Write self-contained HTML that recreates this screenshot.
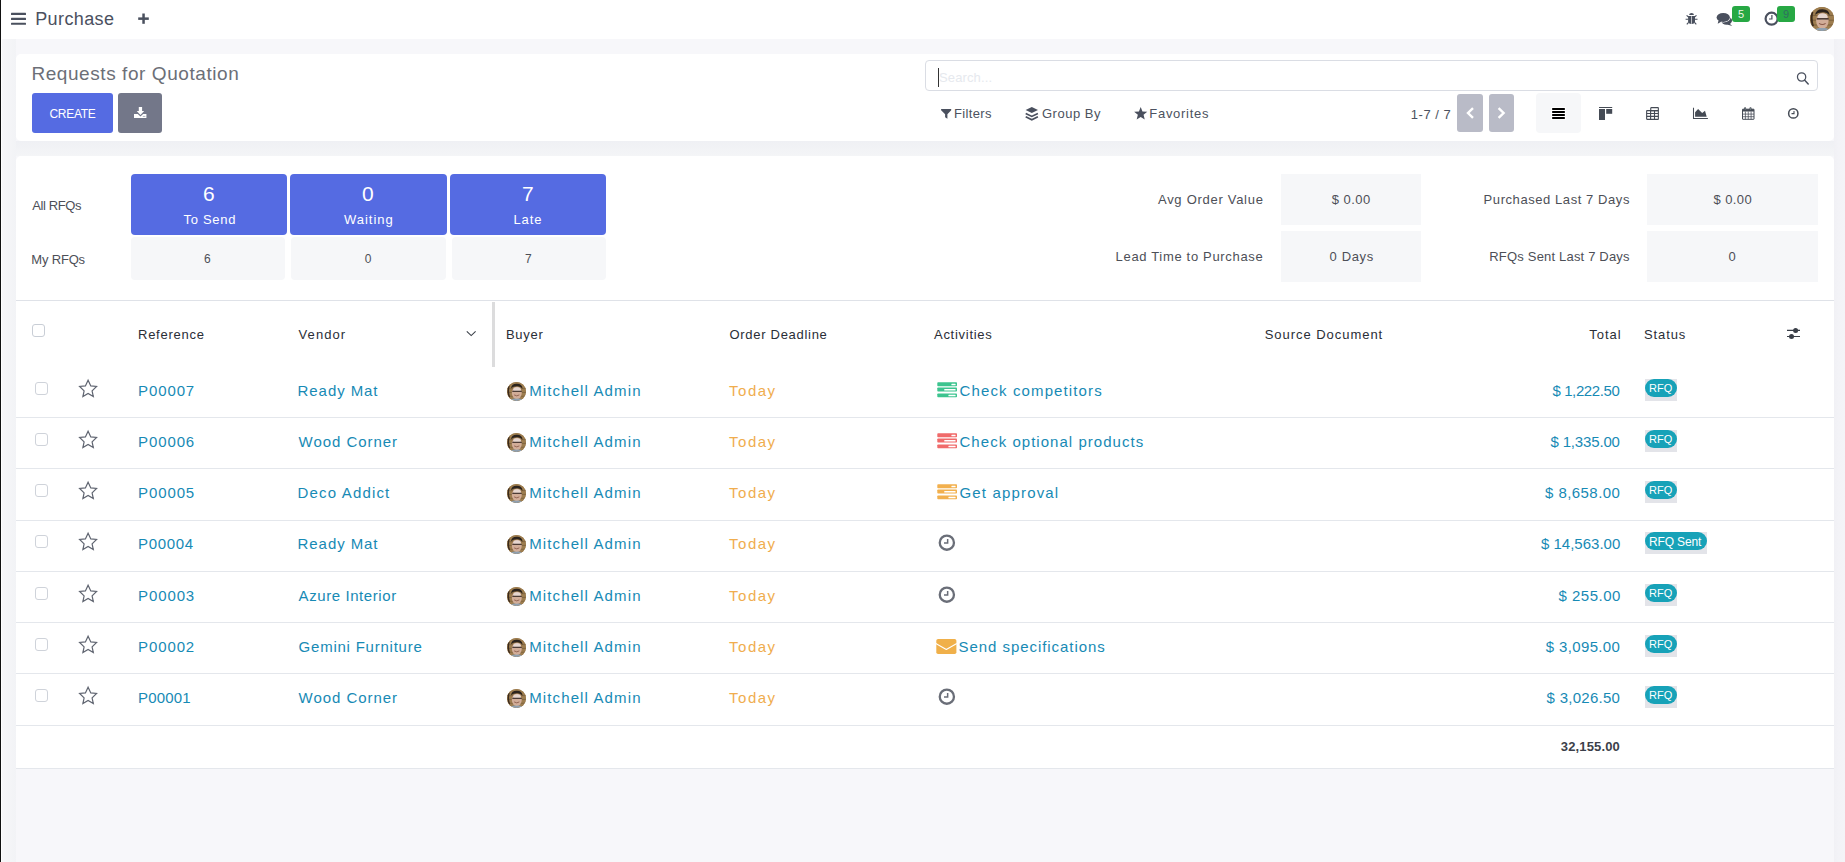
<!DOCTYPE html>
<html><head><meta charset="utf-8"><title>Requests for Quotation</title>
<style>
html,body{margin:0;padding:0;}
body{width:1845px;height:862px;position:relative;overflow:hidden;background:#f7f7fa;font-family:"Liberation Sans",sans-serif;}
.a{position:absolute;}
.i{position:absolute;overflow:visible;}
.t{position:absolute;white-space:pre;line-height:1;font-family:"Liberation Sans",sans-serif;}
</style></head><body>
<div class="a" style="left:0;top:0;width:1px;height:862px;background:#111"></div>
<div class="a" style="left:1px;top:0;width:1844px;height:39px;background:#fff"></div>
<div class="a" style="left:1px;top:0;width:1px;height:862px;background:#fff"></div>
<div class="a" style="left:2px;top:39px;width:14px;height:823px;background:linear-gradient(90deg,#f7f7f9,#f2f3f6)"></div>
<div class="a" style="left:1834px;top:39px;width:11px;height:823px;background:linear-gradient(90deg,#f1f1f5,#f3f3f7 40%,#f4f4f7)"></div>
<div class="a" style="left:16px;top:141px;width:1818px;height:15px;background:linear-gradient(180deg,#eff0f4,#f4f5f7)"></div>
<svg class="i" style="left:11px;top:12px;width:15px;height:13px;" viewBox="0 0 15 13"><rect x="0" y="0.85" width="15" height="2.2" rx="0.5" fill="#4a505e"/><rect x="0" y="5.75" width="15" height="2.2" rx="0.5" fill="#4a505e"/><rect x="0" y="10.65" width="15" height="2.2" rx="0.5" fill="#4a505e"/></svg>
<svg class="i" style="left:138px;top:13px;width:11px;height:11px;" viewBox="0 0 11 11"><rect x="4.3" y="0.5" width="2.5" height="10.3" fill="#4a505e"/><rect x="0.2" y="4.4" width="10.6" height="2.5" fill="#4a505e"/></svg>
<svg class="i" style="left:1685px;top:12px;width:13px;height:14px;" viewBox="0 0 13 14"><g fill="#4a505e"><path d="M4.1 3.1 Q4.3 0.9 6.55 0.9 Q8.8 0.9 9 3.1 Z"/><path d="M3.1 4 H10 V9.5 Q10 11.9 6.55 11.9 Q3.1 11.9 3.1 9.5 Z"/></g><g stroke="#4a505e" stroke-width="1.1" fill="none"><path d="M3.6 5 L1.6 3.3 M9.5 5 L11.5 3.3 M3.1 7.3 L0.6 7.3 M10 7.3 L12.5 7.3 M3.6 10.3 L1.8 12.4 M9.5 10.3 L11.3 12.4"/></g><rect x="6.25" y="4.2" width="0.65" height="7.6" fill="#fff"/></svg>
<svg class="i" style="left:1716px;top:12px;width:18px;height:15px;" viewBox="0 0 18 15"><ellipse cx="10.6" cy="8.6" rx="5.5" ry="4.1" fill="#4a505e"/><path d="M13.2 11.2 L16.2 13.9 L11.2 12.4 Z" fill="#4a505e"/><ellipse cx="7.25" cy="5.45" rx="7.3" ry="5.1" fill="#fff"/><ellipse cx="7.25" cy="5.45" rx="6.65" ry="4.45" fill="#4a505e"/><path d="M2.6 8.2 L1.7 11.8 L5.6 9.6 Z" fill="#4a505e"/></svg>
<div class="a" style="left:1732px;top:6px;width:18px;height:16px;background:#27a844;border-radius:3px"></div>
<div class="t" style="left:1738px;top:9px;font-size:11px;color:#f4f6e8">5</div>
<svg class="i" style="left:1764px;top:11px;width:15px;height:15px;" viewBox="0 0 15 15"><circle cx="7.6" cy="7.7" r="6" stroke="#4a505e" stroke-width="2.2" fill="#fff"/><path d="M7.9 4 V8 H5" stroke="#4a505e" stroke-width="1.2" fill="none"/></svg>
<div class="a" style="left:1777px;top:6px;width:18px;height:16px;background:#27a844;border-radius:3px"></div>
<div class="t" style="left:1783px;top:9px;font-size:11px;color:#2f6e60">9</div>
<div class="a" style="left:1810px;top:7px;width:24px;height:24px;border-radius:50%;overflow:hidden;background:#9a7a4e"><svg style="display:block;width:24px;height:24px" viewBox="0 0 20 20"><rect x="0" y="0" width="20" height="20" fill="#9d7d4f"/><path d="M0 7 H20 M0 11 H20 M0 15 H20" stroke="#7a5f3c" stroke-width="0.8"/><ellipse cx="10.3" cy="11.5" rx="5.2" ry="6.6" fill="#d2ad98"/><ellipse cx="10.6" cy="8" rx="4" ry="2.6" fill="#e6d6cf"/><path d="M4.2 6.5 Q5 1.6 10.5 1.8 Q16 1.8 16.4 7 Q14 4 10.5 4.4 Q6.5 4.4 4.2 6.5Z" fill="#2b231d"/><rect x="5.6" y="9.2" width="10" height="1.3" fill="#4a3a32"/><path d="M7.5 13.6 Q10.3 15.6 13 13.6" stroke="#8a5a4a" stroke-width="0.9" fill="none"/><path d="M3 20 Q5 16.8 10 17.6 Q15 16.8 17.5 20 Z" fill="#8fa0b0"/><path d="M2 4 Q0.5 10 2.5 16" stroke="#3a2a1c" stroke-width="1.6" fill="none"/></svg></div>
<div class="a" style="left:16px;top:54px;width:1818px;height:87px;background:#fff;border-radius:5px"></div>
<div class="a" style="left:32px;top:93px;width:81px;height:40px;background:#556be2;border-radius:3px"></div>
<div class="a" style="left:118px;top:93px;width:44px;height:40px;background:#737789;border-radius:3px"></div>
<svg class="i" style="left:134px;top:107px;width:13px;height:12px;" viewBox="0 0 13 12"><path d="M4.8 0 H8.1 V4 H10.2 L6.45 8 L2.7 4 H4.8 Z" fill="#fff"/><path d="M0 7 H3.8 L6.45 9.6 L9.1 7 H12.4 V11 H0 Z" fill="#fff"/><rect x="8.8" y="8.9" width="2.6" height="0.9" fill="#a9abb8"/></svg>
<div class="a" style="left:925px;top:60px;width:891px;height:29px;border:1px solid #dadde4;border-radius:4px;background:#fff"></div>
<div class="a" style="left:938px;top:68px;width:1px;height:19px;background:#333"></div>
<svg class="i" style="left:1797px;top:72px;width:13px;height:13px;" viewBox="0 0 13 13"><circle cx="4.6" cy="5" r="4.15" stroke="#4a505e" stroke-width="1.25" fill="none"/><path d="M7.5 8.1 L11.2 12" stroke="#4a505e" stroke-width="1.5" stroke-linecap="round"/></svg>
<svg class="i" style="left:941px;top:109px;width:11px;height:11px;" viewBox="0 0 11 11"><path d="M0.1 0 H10.2 V1.2 L6.4 5.2 V9.8 L4.1 8.2 V5.2 L0.1 1.2 Z" fill="#4a505e"/></svg>
<svg class="i" style="left:1025px;top:107px;width:14px;height:14px;" viewBox="0 0 14 14"><path d="M6.8 0 L13 3 L6.8 6 L0.6 3 Z" fill="#4a505e"/><path d="M0.7 6.4 L6.8 9.4 L12.9 6.4" stroke="#4a505e" stroke-width="1.7" fill="none"/><path d="M0.7 9.7 L6.8 12.7 L12.9 9.7" stroke="#4a505e" stroke-width="1.7" fill="none"/></svg>
<svg class="i" style="left:1134px;top:107px;width:14px;height:13px;" viewBox="0 0 14 13"><path d="M6.70 0.00 L8.46 4.47 L13.26 4.77 L9.55 7.83 L10.76 12.48 L6.70 9.90 L2.64 12.48 L3.85 7.83 L0.14 4.77 L4.94 4.47 Z" fill="#4a505e"/></svg>
<div class="a" style="left:1457px;top:94px;width:26px;height:38px;background:#b9bbc7;border-radius:3px"></div>
<div class="a" style="left:1489px;top:94px;width:25px;height:38px;background:#b9bbc7;border-radius:3px"></div>
<svg class="i" style="left:1466px;top:107px;width:9px;height:12px;" viewBox="0 0 9 12"><path d="M7 1.2 L2 6 L7 10.8" stroke="#fff" stroke-width="2.4" fill="none"/></svg>
<svg class="i" style="left:1497px;top:107px;width:9px;height:12px;" viewBox="0 0 9 12"><path d="M1.6 1.2 L6.6 6 L1.6 10.8" stroke="#fff" stroke-width="2.4" fill="none"/></svg>
<div class="a" style="left:1536px;top:93px;width:45px;height:40px;background:#f6f7f9;border-radius:4px"></div>
<svg class="i" style="left:1551px;top:107px;width:15px;height:13px;" viewBox="0 0 15 13"><rect x="0" y="0" width="15" height="13" fill="#fff"/><g fill="#000"><rect x="1" y="1" width="13" height="2" rx="0.8"/><rect x="1" y="4" width="13" height="2" rx="0.8"/><rect x="1" y="7" width="13" height="2" rx="0.8"/><rect x="1" y="10" width="13" height="2" rx="0.8"/></g></svg>
<svg class="i" style="left:1599px;top:107px;width:14px;height:13px;" viewBox="0 0 14 13"><g fill="#454b55"><rect x="0" y="0" width="13.2" height="1"/><rect x="0" y="2" width="6" height="11"/><rect x="7.2" y="2" width="6" height="4.8"/></g></svg>
<svg class="i" style="left:1646px;top:107px;width:14px;height:13px;" viewBox="0 0 14 13"><g fill="none" stroke="#454b55" stroke-width="1.1"><rect x="4.75" y="0.65" width="7.6" height="3" rx="0.4"/><rect x="0.65" y="3.6" width="11.7" height="8.75" rx="0.4"/><path d="M0.65 6.5 H12.35 M0.65 9.4 H12.35 M4.6 3.6 V12.35 M8.5 3.6 V12.35"/></g></svg>
<svg class="i" style="left:1693px;top:107px;width:15px;height:13px;" viewBox="0 0 15 13"><path d="M0.5 0.7 V11.4 H14.9" stroke="#454b55" stroke-width="1.05" fill="none"/><path d="M2.1 9.7 V5.2 L5.1 2.1 L9.2 6 L12 3.8 L13.7 9.7 Z" fill="#454b55"/></svg>
<svg class="i" style="left:1742px;top:107px;width:13px;height:13px;" viewBox="0 0 13 13"><rect x="0.5" y="2.2" width="11.5" height="10.1" rx="0.3" fill="none" stroke="#454b55" stroke-width="1"/><rect x="0.5" y="2.2" width="11.5" height="2.3" fill="#454b55"/><path d="M0.5 7.1 H12 M0.5 9.7 H12 M3.4 4.5 V12.3 M6.25 4.5 V12.3 M9.1 4.5 V12.3" stroke="#454b55" stroke-width="0.75"/><rect x="2.1" y="0.2" width="2" height="3.2" rx="0.9" fill="#454b55"/><rect x="7.5" y="0.2" width="2" height="3.2" rx="0.9" fill="#454b55"/><rect x="2.85" y="1" width="0.5" height="2" fill="#9aa"/><rect x="8.25" y="1" width="0.5" height="2" fill="#9aa"/></svg>
<svg class="i" style="left:1787px;top:107px;width:13px;height:13px;" viewBox="0 0 13 13"><circle cx="6.3" cy="6.4" r="4.65" stroke="#454b55" stroke-width="1.5" fill="none"/><path d="M7 3.9 V6.6 H4.5" stroke="#454b55" stroke-width="1.1" fill="none"/></svg>
<div class="a" style="left:16px;top:156px;width:1818px;height:612px;background:#fff;border-radius:5px 5px 0 0"></div>
<div class="a" style="left:131px;top:174px;width:156px;height:61px;background:#556be2;border-radius:4px"></div>
<div class="a" style="left:290px;top:174px;width:157px;height:61px;background:#556be2;border-radius:4px"></div>
<div class="a" style="left:450px;top:174px;width:156px;height:61px;background:#556be2;border-radius:4px"></div>
<div class="a" style="left:131px;top:237px;width:154px;height:43px;background:#f6f7f9;border-radius:4px"></div>
<div class="a" style="left:291px;top:237px;width:155px;height:43px;background:#f6f7f9;border-radius:4px"></div>
<div class="a" style="left:452px;top:237px;width:154px;height:43px;background:#f6f7f9;border-radius:4px"></div>
<div class="a" style="left:1281px;top:174px;width:140px;height:51px;background:#f6f7f9"></div>
<div class="a" style="left:1281px;top:231px;width:140px;height:51px;background:#f6f7f9"></div>
<div class="a" style="left:1647px;top:174px;width:171px;height:51px;background:#f6f7f9"></div>
<div class="a" style="left:1647px;top:231px;width:171px;height:51px;background:#f6f7f9"></div>
<div class="a" style="left:16px;top:300px;width:1818px;height:1px;background:#dfe2e8"></div>
<div class="a" style="left:32px;top:324px;width:11px;height:11px;border:1px solid #c9ced6;border-radius:3px;background:#fff"></div>
<svg class="i" style="left:466px;top:330px;width:11px;height:7px;" viewBox="0 0 11 7"><path d="M0.8 1.3 L5.2 5.6 L9.6 1.3" stroke="#3a3f48" stroke-width="1.1" fill="none"/></svg>
<div class="a" style="left:492px;top:302px;width:3px;height:65px;background:#dcdcdd"></div>
<svg class="i" style="left:1787px;top:328px;width:14px;height:12px;" viewBox="0 0 14 12"><g stroke="#3a3f48" stroke-width="1.1"><path d="M0 2.4 H13 M0 8.5 H13"/></g><circle cx="8.6" cy="2.4" r="2.5" fill="#3a3f48"/><circle cx="4.5" cy="8.5" r="2.5" fill="#3a3f48"/></svg>
<div class="a" style="left:16px;top:417px;width:1818px;height:1px;background:#e4e7ec"></div>
<div class="a" style="left:35px;top:382px;width:11px;height:11px;border:1px solid #cfd3da;border-radius:3px;background:#fff"></div>
<svg class="i" style="left:78px;top:378.5px;width:20px;height:19px;" viewBox="0 0 20 19"><path d="M10.1 1.2 L12.8 6.9 L18.6 7.5 L14.1 11.9 L15.3 17.6 L10.1 14.5 L4.9 17.6 L6.1 11.9 L1.6 7.5 L7.4 6.9 Z" stroke="#5f6470" stroke-width="1.2" fill="none" stroke-linejoin="miter"/></svg>
<div class="a" style="left:507px;top:381.8px;width:19px;height:19px;border-radius:50%;overflow:hidden;background:#9a7a4e"><svg style="display:block;width:19px;height:19px" viewBox="0 0 20 20"><rect x="0" y="0" width="20" height="20" fill="#9d7d4f"/><path d="M0 7 H20 M0 11 H20 M0 15 H20" stroke="#7a5f3c" stroke-width="0.8"/><ellipse cx="10.3" cy="11.5" rx="5.2" ry="6.6" fill="#d2ad98"/><ellipse cx="10.6" cy="8" rx="4" ry="2.6" fill="#e6d6cf"/><path d="M4.2 6.5 Q5 1.6 10.5 1.8 Q16 1.8 16.4 7 Q14 4 10.5 4.4 Q6.5 4.4 4.2 6.5Z" fill="#2b231d"/><rect x="5.6" y="9.2" width="10" height="1.3" fill="#4a3a32"/><path d="M7.5 13.6 Q10.3 15.6 13 13.6" stroke="#8a5a4a" stroke-width="0.9" fill="none"/><path d="M3 20 Q5 16.8 10 17.6 Q15 16.8 17.5 20 Z" fill="#8fa0b0"/><path d="M2 4 Q0.5 10 2.5 16" stroke="#3a2a1c" stroke-width="1.6" fill="none"/></svg></div>
<svg class="i" style="left:936.5px;top:381.5px;width:21px;height:16px;" viewBox="0 0 21 16"><g fill="#3cc48f"><rect x="0.3" y="0.2" width="19.7" height="4.1" rx="0.8"/><rect x="0.3" y="5.5" width="19.7" height="4" rx="0.8"/><rect x="0.3" y="11.4" width="19.7" height="3.9" rx="0.8"/></g><g fill="#fff"><rect x="14.4" y="1.7" width="4.2" height="1.6" rx="0.5"/><rect x="7.2" y="6.9" width="11.4" height="1.6" rx="0.5"/><rect x="11.4" y="12.7" width="7.2" height="1.6" rx="0.5"/></g></svg>
<div class="a" style="left:1645px;top:379px;width:32px;height:22px;background:#e3e4e9"></div>
<div class="a" style="left:1645px;top:379px;width:32px;height:18px;background:#17a2b8;border-radius:9px"></div>
<div class="a" style="left:16px;top:468px;width:1818px;height:1px;background:#e4e7ec"></div>
<div class="a" style="left:35px;top:433px;width:11px;height:11px;border:1px solid #cfd3da;border-radius:3px;background:#fff"></div>
<svg class="i" style="left:78px;top:429.5px;width:20px;height:19px;" viewBox="0 0 20 19"><path d="M10.1 1.2 L12.8 6.9 L18.6 7.5 L14.1 11.9 L15.3 17.6 L10.1 14.5 L4.9 17.6 L6.1 11.9 L1.6 7.5 L7.4 6.9 Z" stroke="#5f6470" stroke-width="1.2" fill="none" stroke-linejoin="miter"/></svg>
<div class="a" style="left:507px;top:432.8px;width:19px;height:19px;border-radius:50%;overflow:hidden;background:#9a7a4e"><svg style="display:block;width:19px;height:19px" viewBox="0 0 20 20"><rect x="0" y="0" width="20" height="20" fill="#9d7d4f"/><path d="M0 7 H20 M0 11 H20 M0 15 H20" stroke="#7a5f3c" stroke-width="0.8"/><ellipse cx="10.3" cy="11.5" rx="5.2" ry="6.6" fill="#d2ad98"/><ellipse cx="10.6" cy="8" rx="4" ry="2.6" fill="#e6d6cf"/><path d="M4.2 6.5 Q5 1.6 10.5 1.8 Q16 1.8 16.4 7 Q14 4 10.5 4.4 Q6.5 4.4 4.2 6.5Z" fill="#2b231d"/><rect x="5.6" y="9.2" width="10" height="1.3" fill="#4a3a32"/><path d="M7.5 13.6 Q10.3 15.6 13 13.6" stroke="#8a5a4a" stroke-width="0.9" fill="none"/><path d="M3 20 Q5 16.8 10 17.6 Q15 16.8 17.5 20 Z" fill="#8fa0b0"/><path d="M2 4 Q0.5 10 2.5 16" stroke="#3a2a1c" stroke-width="1.6" fill="none"/></svg></div>
<svg class="i" style="left:936.5px;top:432.5px;width:21px;height:16px;" viewBox="0 0 21 16"><g fill="#f06a6a"><rect x="0.3" y="0.2" width="19.7" height="4.1" rx="0.8"/><rect x="0.3" y="5.5" width="19.7" height="4" rx="0.8"/><rect x="0.3" y="11.4" width="19.7" height="3.9" rx="0.8"/></g><g fill="#fff"><rect x="14.4" y="1.7" width="4.2" height="1.6" rx="0.5"/><rect x="7.2" y="6.9" width="11.4" height="1.6" rx="0.5"/><rect x="11.4" y="12.7" width="7.2" height="1.6" rx="0.5"/></g></svg>
<div class="a" style="left:1645px;top:430px;width:32px;height:22px;background:#e3e4e9"></div>
<div class="a" style="left:1645px;top:430px;width:32px;height:18px;background:#17a2b8;border-radius:9px"></div>
<div class="a" style="left:16px;top:520px;width:1818px;height:1px;background:#e4e7ec"></div>
<div class="a" style="left:35px;top:484px;width:11px;height:11px;border:1px solid #cfd3da;border-radius:3px;background:#fff"></div>
<svg class="i" style="left:78px;top:480.5px;width:20px;height:19px;" viewBox="0 0 20 19"><path d="M10.1 1.2 L12.8 6.9 L18.6 7.5 L14.1 11.9 L15.3 17.6 L10.1 14.5 L4.9 17.6 L6.1 11.9 L1.6 7.5 L7.4 6.9 Z" stroke="#5f6470" stroke-width="1.2" fill="none" stroke-linejoin="miter"/></svg>
<div class="a" style="left:507px;top:483.8px;width:19px;height:19px;border-radius:50%;overflow:hidden;background:#9a7a4e"><svg style="display:block;width:19px;height:19px" viewBox="0 0 20 20"><rect x="0" y="0" width="20" height="20" fill="#9d7d4f"/><path d="M0 7 H20 M0 11 H20 M0 15 H20" stroke="#7a5f3c" stroke-width="0.8"/><ellipse cx="10.3" cy="11.5" rx="5.2" ry="6.6" fill="#d2ad98"/><ellipse cx="10.6" cy="8" rx="4" ry="2.6" fill="#e6d6cf"/><path d="M4.2 6.5 Q5 1.6 10.5 1.8 Q16 1.8 16.4 7 Q14 4 10.5 4.4 Q6.5 4.4 4.2 6.5Z" fill="#2b231d"/><rect x="5.6" y="9.2" width="10" height="1.3" fill="#4a3a32"/><path d="M7.5 13.6 Q10.3 15.6 13 13.6" stroke="#8a5a4a" stroke-width="0.9" fill="none"/><path d="M3 20 Q5 16.8 10 17.6 Q15 16.8 17.5 20 Z" fill="#8fa0b0"/><path d="M2 4 Q0.5 10 2.5 16" stroke="#3a2a1c" stroke-width="1.6" fill="none"/></svg></div>
<svg class="i" style="left:936.5px;top:483.5px;width:21px;height:16px;" viewBox="0 0 21 16"><g fill="#f2b04d"><rect x="0.3" y="0.2" width="19.7" height="4.1" rx="0.8"/><rect x="0.3" y="5.5" width="19.7" height="4" rx="0.8"/><rect x="0.3" y="11.4" width="19.7" height="3.9" rx="0.8"/></g><g fill="#fff"><rect x="14.4" y="1.7" width="4.2" height="1.6" rx="0.5"/><rect x="7.2" y="6.9" width="11.4" height="1.6" rx="0.5"/><rect x="11.4" y="12.7" width="7.2" height="1.6" rx="0.5"/></g></svg>
<div class="a" style="left:1645px;top:481px;width:32px;height:22px;background:#e3e4e9"></div>
<div class="a" style="left:1645px;top:481px;width:32px;height:18px;background:#17a2b8;border-radius:9px"></div>
<div class="a" style="left:16px;top:571px;width:1818px;height:1px;background:#e4e7ec"></div>
<div class="a" style="left:35px;top:535px;width:11px;height:11px;border:1px solid #cfd3da;border-radius:3px;background:#fff"></div>
<svg class="i" style="left:78px;top:531.5px;width:20px;height:19px;" viewBox="0 0 20 19"><path d="M10.1 1.2 L12.8 6.9 L18.6 7.5 L14.1 11.9 L15.3 17.6 L10.1 14.5 L4.9 17.6 L6.1 11.9 L1.6 7.5 L7.4 6.9 Z" stroke="#5f6470" stroke-width="1.2" fill="none" stroke-linejoin="miter"/></svg>
<div class="a" style="left:507px;top:534.8px;width:19px;height:19px;border-radius:50%;overflow:hidden;background:#9a7a4e"><svg style="display:block;width:19px;height:19px" viewBox="0 0 20 20"><rect x="0" y="0" width="20" height="20" fill="#9d7d4f"/><path d="M0 7 H20 M0 11 H20 M0 15 H20" stroke="#7a5f3c" stroke-width="0.8"/><ellipse cx="10.3" cy="11.5" rx="5.2" ry="6.6" fill="#d2ad98"/><ellipse cx="10.6" cy="8" rx="4" ry="2.6" fill="#e6d6cf"/><path d="M4.2 6.5 Q5 1.6 10.5 1.8 Q16 1.8 16.4 7 Q14 4 10.5 4.4 Q6.5 4.4 4.2 6.5Z" fill="#2b231d"/><rect x="5.6" y="9.2" width="10" height="1.3" fill="#4a3a32"/><path d="M7.5 13.6 Q10.3 15.6 13 13.6" stroke="#8a5a4a" stroke-width="0.9" fill="none"/><path d="M3 20 Q5 16.8 10 17.6 Q15 16.8 17.5 20 Z" fill="#8fa0b0"/><path d="M2 4 Q0.5 10 2.5 16" stroke="#3a2a1c" stroke-width="1.6" fill="none"/></svg></div>
<svg class="i" style="left:937.5px;top:534.1px;width:18px;height:18px;" viewBox="0 0 18 18"><circle cx="8.85" cy="8.65" r="7.1" stroke="#6a6e78" stroke-width="2.3" fill="none"/><path d="M9.65 4.9 V9.1 H6" stroke="#6a6e78" stroke-width="1.5" fill="none"/></svg>
<div class="a" style="left:1645px;top:532px;width:62px;height:22px;background:#e3e4e9"></div>
<div class="a" style="left:1645px;top:532px;width:62px;height:18px;background:#17a2b8;border-radius:9px"></div>
<div class="a" style="left:16px;top:622px;width:1818px;height:1px;background:#e4e7ec"></div>
<div class="a" style="left:35px;top:587px;width:11px;height:11px;border:1px solid #cfd3da;border-radius:3px;background:#fff"></div>
<svg class="i" style="left:78px;top:583.5px;width:20px;height:19px;" viewBox="0 0 20 19"><path d="M10.1 1.2 L12.8 6.9 L18.6 7.5 L14.1 11.9 L15.3 17.6 L10.1 14.5 L4.9 17.6 L6.1 11.9 L1.6 7.5 L7.4 6.9 Z" stroke="#5f6470" stroke-width="1.2" fill="none" stroke-linejoin="miter"/></svg>
<div class="a" style="left:507px;top:586.8px;width:19px;height:19px;border-radius:50%;overflow:hidden;background:#9a7a4e"><svg style="display:block;width:19px;height:19px" viewBox="0 0 20 20"><rect x="0" y="0" width="20" height="20" fill="#9d7d4f"/><path d="M0 7 H20 M0 11 H20 M0 15 H20" stroke="#7a5f3c" stroke-width="0.8"/><ellipse cx="10.3" cy="11.5" rx="5.2" ry="6.6" fill="#d2ad98"/><ellipse cx="10.6" cy="8" rx="4" ry="2.6" fill="#e6d6cf"/><path d="M4.2 6.5 Q5 1.6 10.5 1.8 Q16 1.8 16.4 7 Q14 4 10.5 4.4 Q6.5 4.4 4.2 6.5Z" fill="#2b231d"/><rect x="5.6" y="9.2" width="10" height="1.3" fill="#4a3a32"/><path d="M7.5 13.6 Q10.3 15.6 13 13.6" stroke="#8a5a4a" stroke-width="0.9" fill="none"/><path d="M3 20 Q5 16.8 10 17.6 Q15 16.8 17.5 20 Z" fill="#8fa0b0"/><path d="M2 4 Q0.5 10 2.5 16" stroke="#3a2a1c" stroke-width="1.6" fill="none"/></svg></div>
<svg class="i" style="left:937.5px;top:586.1px;width:18px;height:18px;" viewBox="0 0 18 18"><circle cx="8.85" cy="8.65" r="7.1" stroke="#6a6e78" stroke-width="2.3" fill="none"/><path d="M9.65 4.9 V9.1 H6" stroke="#6a6e78" stroke-width="1.5" fill="none"/></svg>
<div class="a" style="left:1645px;top:584px;width:32px;height:22px;background:#e3e4e9"></div>
<div class="a" style="left:1645px;top:584px;width:32px;height:18px;background:#17a2b8;border-radius:9px"></div>
<div class="a" style="left:16px;top:673px;width:1818px;height:1px;background:#e4e7ec"></div>
<div class="a" style="left:35px;top:638px;width:11px;height:11px;border:1px solid #cfd3da;border-radius:3px;background:#fff"></div>
<svg class="i" style="left:78px;top:634.5px;width:20px;height:19px;" viewBox="0 0 20 19"><path d="M10.1 1.2 L12.8 6.9 L18.6 7.5 L14.1 11.9 L15.3 17.6 L10.1 14.5 L4.9 17.6 L6.1 11.9 L1.6 7.5 L7.4 6.9 Z" stroke="#5f6470" stroke-width="1.2" fill="none" stroke-linejoin="miter"/></svg>
<div class="a" style="left:507px;top:637.8px;width:19px;height:19px;border-radius:50%;overflow:hidden;background:#9a7a4e"><svg style="display:block;width:19px;height:19px" viewBox="0 0 20 20"><rect x="0" y="0" width="20" height="20" fill="#9d7d4f"/><path d="M0 7 H20 M0 11 H20 M0 15 H20" stroke="#7a5f3c" stroke-width="0.8"/><ellipse cx="10.3" cy="11.5" rx="5.2" ry="6.6" fill="#d2ad98"/><ellipse cx="10.6" cy="8" rx="4" ry="2.6" fill="#e6d6cf"/><path d="M4.2 6.5 Q5 1.6 10.5 1.8 Q16 1.8 16.4 7 Q14 4 10.5 4.4 Q6.5 4.4 4.2 6.5Z" fill="#2b231d"/><rect x="5.6" y="9.2" width="10" height="1.3" fill="#4a3a32"/><path d="M7.5 13.6 Q10.3 15.6 13 13.6" stroke="#8a5a4a" stroke-width="0.9" fill="none"/><path d="M3 20 Q5 16.8 10 17.6 Q15 16.8 17.5 20 Z" fill="#8fa0b0"/><path d="M2 4 Q0.5 10 2.5 16" stroke="#3a2a1c" stroke-width="1.6" fill="none"/></svg></div>
<svg class="i" style="left:936px;top:638.9px;width:21px;height:15px;" viewBox="0 0 21 15"><rect x="0.3" y="0" width="20.1" height="15.1" rx="1.8" fill="#f0b04a"/><path d="M-0.2 4.5 L10.3 10.5 L20.8 4.5" stroke="#fff" stroke-width="1.1" fill="none" stroke-linejoin="round"/></svg>
<div class="a" style="left:1645px;top:635px;width:32px;height:22px;background:#e3e4e9"></div>
<div class="a" style="left:1645px;top:635px;width:32px;height:18px;background:#17a2b8;border-radius:9px"></div>
<div class="a" style="left:16px;top:725px;width:1818px;height:1px;background:#e4e7ec"></div>
<div class="a" style="left:35px;top:689px;width:11px;height:11px;border:1px solid #cfd3da;border-radius:3px;background:#fff"></div>
<svg class="i" style="left:78px;top:685.5px;width:20px;height:19px;" viewBox="0 0 20 19"><path d="M10.1 1.2 L12.8 6.9 L18.6 7.5 L14.1 11.9 L15.3 17.6 L10.1 14.5 L4.9 17.6 L6.1 11.9 L1.6 7.5 L7.4 6.9 Z" stroke="#5f6470" stroke-width="1.2" fill="none" stroke-linejoin="miter"/></svg>
<div class="a" style="left:507px;top:688.8px;width:19px;height:19px;border-radius:50%;overflow:hidden;background:#9a7a4e"><svg style="display:block;width:19px;height:19px" viewBox="0 0 20 20"><rect x="0" y="0" width="20" height="20" fill="#9d7d4f"/><path d="M0 7 H20 M0 11 H20 M0 15 H20" stroke="#7a5f3c" stroke-width="0.8"/><ellipse cx="10.3" cy="11.5" rx="5.2" ry="6.6" fill="#d2ad98"/><ellipse cx="10.6" cy="8" rx="4" ry="2.6" fill="#e6d6cf"/><path d="M4.2 6.5 Q5 1.6 10.5 1.8 Q16 1.8 16.4 7 Q14 4 10.5 4.4 Q6.5 4.4 4.2 6.5Z" fill="#2b231d"/><rect x="5.6" y="9.2" width="10" height="1.3" fill="#4a3a32"/><path d="M7.5 13.6 Q10.3 15.6 13 13.6" stroke="#8a5a4a" stroke-width="0.9" fill="none"/><path d="M3 20 Q5 16.8 10 17.6 Q15 16.8 17.5 20 Z" fill="#8fa0b0"/><path d="M2 4 Q0.5 10 2.5 16" stroke="#3a2a1c" stroke-width="1.6" fill="none"/></svg></div>
<svg class="i" style="left:937.5px;top:688.1px;width:18px;height:18px;" viewBox="0 0 18 18"><circle cx="8.85" cy="8.65" r="7.1" stroke="#6a6e78" stroke-width="2.3" fill="none"/><path d="M9.65 4.9 V9.1 H6" stroke="#6a6e78" stroke-width="1.5" fill="none"/></svg>
<div class="a" style="left:1645px;top:686px;width:32px;height:22px;background:#e3e4e9"></div>
<div class="a" style="left:1645px;top:686px;width:32px;height:18px;background:#17a2b8;border-radius:9px"></div>
<div class="a" style="left:16px;top:768px;width:1818px;height:1px;background:#e4e7ec"></div>
<div class="t" style="left:35.20px;top:9.70px;font-size:18px;letter-spacing:0.400px;color:#4b5060;">Purchase</div>
<div class="t" style="left:31.40px;top:63.80px;font-size:19px;letter-spacing:0.571px;color:#6c6f77;">Requests for Quotation</div>
<div class="t" style="left:49.40px;top:108.00px;font-size:12px;letter-spacing:-0.280px;color:#ffffff;">CREATE</div>
<div class="t" style="left:939.00px;top:70.50px;font-size:13px;letter-spacing:0.125px;color:#e6e9ee;">Search...</div>
<div class="t" style="left:954.00px;top:107.20px;font-size:13px;letter-spacing:0.333px;color:#4c5260;">Filters</div>
<div class="t" style="left:1041.90px;top:106.90px;font-size:13px;letter-spacing:0.529px;color:#4c5260;">Group By</div>
<div class="t" style="left:1149.30px;top:106.90px;font-size:13px;letter-spacing:0.713px;color:#4c5260;">Favorites</div>
<div class="t" style="left:1410.80px;top:107.90px;font-size:13px;letter-spacing:0.533px;color:#4c5260;">1-7 / 7</div>
<div class="t" style="left:32.30px;top:199.20px;font-size:13px;letter-spacing:-0.400px;color:#4d4f57;">All RFQs</div>
<div class="t" style="left:31.30px;top:253.00px;font-size:13px;letter-spacing:-0.183px;color:#4d4f57;">My RFQs</div>
<div class="t" style="left:203.00px;top:183.20px;font-size:21px;letter-spacing:0.200px;color:#ffffff;">6</div>
<div class="t" style="left:183.60px;top:212.90px;font-size:13px;letter-spacing:0.683px;color:#ffffff;">To Send</div>
<div class="t" style="left:361.90px;top:183.20px;font-size:21px;letter-spacing:1.100px;color:#ffffff;">0</div>
<div class="t" style="left:344.10px;top:212.90px;font-size:13px;letter-spacing:0.950px;color:#ffffff;">Waiting</div>
<div class="t" style="left:521.90px;top:183.20px;font-size:21px;letter-spacing:0.000px;color:#ffffff;">7</div>
<div class="t" style="left:513.40px;top:212.90px;font-size:13px;letter-spacing:0.967px;color:#ffffff;">Late</div>
<div class="t" style="left:204.00px;top:252.50px;font-size:12px;letter-spacing:1.400px;color:#4d4f57;">6</div>
<div class="t" style="left:364.80px;top:252.50px;font-size:12px;letter-spacing:0.400px;color:#4d4f57;">0</div>
<div class="t" style="left:525.10px;top:252.50px;font-size:12px;letter-spacing:1.000px;color:#4d4f57;">7</div>
<div class="t" style="left:1158.00px;top:193.30px;font-size:13px;letter-spacing:0.714px;color:#4d4f57;">Avg Order Value</div>
<div class="t" style="left:1115.60px;top:250.20px;font-size:13px;letter-spacing:0.670px;color:#4d4f57;">Lead Time to Purchase</div>
<div class="t" style="left:1331.80px;top:193.30px;font-size:13px;letter-spacing:0.440px;color:#4d4f57;">$ 0.00</div>
<div class="t" style="left:1329.50px;top:250.20px;font-size:13px;letter-spacing:0.660px;color:#4d4f57;">0 Days</div>
<div class="t" style="left:1483.60px;top:193.30px;font-size:13px;letter-spacing:0.570px;color:#4d4f57;">Purchased Last 7 Days</div>
<div class="t" style="left:1489.30px;top:250.20px;font-size:13px;letter-spacing:0.185px;color:#4d4f57;">RFQs Sent Last 7 Days</div>
<div class="t" style="left:1713.50px;top:193.30px;font-size:13px;letter-spacing:0.400px;color:#4d4f57;">$ 0.00</div>
<div class="t" style="left:1728.50px;top:250.20px;font-size:13px;letter-spacing:0.800px;color:#4d4f57;">0</div>
<div class="t" style="left:138.00px;top:328.00px;font-size:13px;letter-spacing:0.750px;color:#2a2e37;">Reference</div>
<div class="t" style="left:298.50px;top:328.00px;font-size:13px;letter-spacing:1.100px;color:#2a2e37;">Vendor</div>
<div class="t" style="left:505.90px;top:328.00px;font-size:13px;letter-spacing:0.750px;color:#2a2e37;">Buyer</div>
<div class="t" style="left:729.40px;top:328.00px;font-size:13px;letter-spacing:0.715px;color:#2a2e37;">Order Deadline</div>
<div class="t" style="left:934.00px;top:328.00px;font-size:13px;letter-spacing:0.722px;color:#2a2e37;">Activities</div>
<div class="t" style="left:1264.70px;top:328.00px;font-size:13px;letter-spacing:0.964px;color:#2a2e37;">Source Document</div>
<div class="t" style="left:1589.30px;top:328.00px;font-size:13px;letter-spacing:0.975px;color:#2a2e37;">Total</div>
<div class="t" style="left:1644.00px;top:328.00px;font-size:13px;letter-spacing:0.900px;color:#2a2e37;">Status</div>
<div class="t" style="left:138.00px;top:383.00px;font-size:15px;letter-spacing:0.900px;color:#178ab5;">P00007</div>
<div class="t" style="left:297.60px;top:383.00px;font-size:15px;letter-spacing:0.925px;color:#178ab5;">Ready Mat</div>
<div class="t" style="left:529.20px;top:383.00px;font-size:15px;letter-spacing:1.123px;color:#178ab5;">Mitchell Admin</div>
<div class="t" style="left:729.10px;top:383.00px;font-size:15px;letter-spacing:1.475px;color:#f0ad4e;">Today</div>
<div class="t" style="left:959.50px;top:383.00px;font-size:15px;letter-spacing:1.125px;color:#178ab5;">Check competitors</div>
<div class="t" style="left:1552.40px;top:383.00px;font-size:15px;letter-spacing:-0.378px;color:#178ab5;">$ 1,222.50</div>
<div class="t" style="left:1649.00px;top:383.00px;font-size:11px;letter-spacing:0.000px;color:#ffffff;">RFQ</div>
<div class="t" style="left:138.00px;top:434.00px;font-size:15px;letter-spacing:0.900px;color:#178ab5;">P00006</div>
<div class="t" style="left:298.60px;top:434.00px;font-size:15px;letter-spacing:0.950px;color:#178ab5;">Wood Corner</div>
<div class="t" style="left:529.20px;top:434.00px;font-size:15px;letter-spacing:1.123px;color:#178ab5;">Mitchell Admin</div>
<div class="t" style="left:729.10px;top:434.00px;font-size:15px;letter-spacing:1.475px;color:#f0ad4e;">Today</div>
<div class="t" style="left:959.50px;top:434.00px;font-size:15px;letter-spacing:1.036px;color:#178ab5;">Check optional products</div>
<div class="t" style="left:1550.50px;top:434.00px;font-size:15px;letter-spacing:-0.167px;color:#178ab5;">$ 1,335.00</div>
<div class="t" style="left:1649.00px;top:434.00px;font-size:11px;letter-spacing:0.000px;color:#ffffff;">RFQ</div>
<div class="t" style="left:138.00px;top:485.00px;font-size:15px;letter-spacing:0.900px;color:#178ab5;">P00005</div>
<div class="t" style="left:297.60px;top:485.00px;font-size:15px;letter-spacing:1.160px;color:#178ab5;">Deco Addict</div>
<div class="t" style="left:529.20px;top:485.00px;font-size:15px;letter-spacing:1.123px;color:#178ab5;">Mitchell Admin</div>
<div class="t" style="left:729.10px;top:485.00px;font-size:15px;letter-spacing:1.475px;color:#f0ad4e;">Today</div>
<div class="t" style="left:959.50px;top:485.00px;font-size:15px;letter-spacing:1.164px;color:#178ab5;">Get approval</div>
<div class="t" style="left:1545.00px;top:485.00px;font-size:15px;letter-spacing:0.444px;color:#178ab5;">$ 8,658.00</div>
<div class="t" style="left:1649.00px;top:485.00px;font-size:11px;letter-spacing:0.000px;color:#ffffff;">RFQ</div>
<div class="t" style="left:138.00px;top:536.00px;font-size:15px;letter-spacing:0.700px;color:#178ab5;">P00004</div>
<div class="t" style="left:297.60px;top:536.00px;font-size:15px;letter-spacing:0.925px;color:#178ab5;">Ready Mat</div>
<div class="t" style="left:529.20px;top:536.00px;font-size:15px;letter-spacing:1.123px;color:#178ab5;">Mitchell Admin</div>
<div class="t" style="left:729.10px;top:536.00px;font-size:15px;letter-spacing:1.475px;color:#f0ad4e;">Today</div>
<div class="t" style="left:1541.00px;top:536.00px;font-size:15px;letter-spacing:0.000px;color:#178ab5;">$ 14,563.00</div>
<div class="t" style="left:1648.90px;top:535.80px;font-size:12px;letter-spacing:-0.129px;color:#ffffff;">RFQ Sent</div>
<div class="t" style="left:138.00px;top:588.00px;font-size:15px;letter-spacing:0.900px;color:#178ab5;">P00003</div>
<div class="t" style="left:298.60px;top:588.00px;font-size:15px;letter-spacing:0.577px;color:#178ab5;">Azure Interior</div>
<div class="t" style="left:529.20px;top:588.00px;font-size:15px;letter-spacing:1.123px;color:#178ab5;">Mitchell Admin</div>
<div class="t" style="left:729.10px;top:588.00px;font-size:15px;letter-spacing:1.475px;color:#f0ad4e;">Today</div>
<div class="t" style="left:1558.40px;top:588.00px;font-size:15px;letter-spacing:0.514px;color:#178ab5;">$ 255.00</div>
<div class="t" style="left:1649.00px;top:588.00px;font-size:11px;letter-spacing:0.000px;color:#ffffff;">RFQ</div>
<div class="t" style="left:138.00px;top:639.00px;font-size:15px;letter-spacing:0.900px;color:#178ab5;">P00002</div>
<div class="t" style="left:298.60px;top:639.00px;font-size:15px;letter-spacing:0.767px;color:#178ab5;">Gemini Furniture</div>
<div class="t" style="left:529.20px;top:639.00px;font-size:15px;letter-spacing:1.123px;color:#178ab5;">Mitchell Admin</div>
<div class="t" style="left:729.10px;top:639.00px;font-size:15px;letter-spacing:1.475px;color:#f0ad4e;">Today</div>
<div class="t" style="left:958.50px;top:639.00px;font-size:15px;letter-spacing:0.950px;color:#178ab5;">Send specifications</div>
<div class="t" style="left:1545.80px;top:639.00px;font-size:15px;letter-spacing:0.356px;color:#178ab5;">$ 3,095.00</div>
<div class="t" style="left:1649.00px;top:639.00px;font-size:11px;letter-spacing:0.000px;color:#ffffff;">RFQ</div>
<div class="t" style="left:138.00px;top:690.00px;font-size:15px;letter-spacing:0.200px;color:#178ab5;">P00001</div>
<div class="t" style="left:298.60px;top:690.00px;font-size:15px;letter-spacing:0.950px;color:#178ab5;">Wood Corner</div>
<div class="t" style="left:529.20px;top:690.00px;font-size:15px;letter-spacing:1.123px;color:#178ab5;">Mitchell Admin</div>
<div class="t" style="left:729.10px;top:690.00px;font-size:15px;letter-spacing:1.475px;color:#f0ad4e;">Today</div>
<div class="t" style="left:1546.60px;top:690.00px;font-size:15px;letter-spacing:0.267px;color:#178ab5;">$ 3,026.50</div>
<div class="t" style="left:1649.00px;top:690.00px;font-size:11px;letter-spacing:0.000px;color:#ffffff;">RFQ</div>
<div class="t" style="left:1560.80px;top:740.00px;font-size:13px;letter-spacing:0.150px;color:#3c3f4a;font-weight:700;">32,155.00</div>
</body></html>
